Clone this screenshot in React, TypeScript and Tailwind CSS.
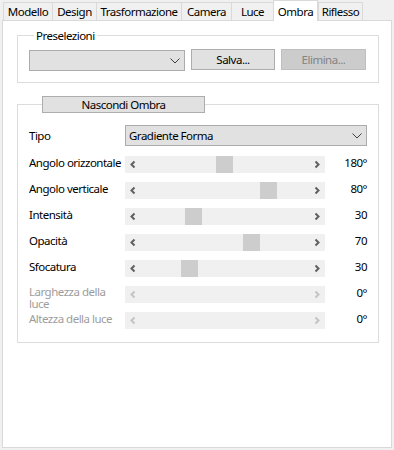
import React from "react";

const font = { fontFamily: '"Noto Sans", "Open Sans", sans-serif', letterSpacing: "-0.5px" };

function Tab({ label, w, selected, last }: { label: string; w: string; selected?: boolean; last?: boolean }) {
  if (selected) {
    return (
      <div className={`relative z-10 -mb-px flex h-[21px] items-start justify-center border-x border-t border-[#d9d9d9] bg-white pt-[2px] ${w}`}>
        {label}
      </div>
    );
  }
  return (
    <div className={`flex h-[18px] items-center justify-center whitespace-nowrap border-l border-t border-[#d9d9d9] bg-[#f0f0f0] pt-[1px] ${last ? "border-r" : ""} ${w}`}>
      {label}
    </div>
  );
}

function Chevron({ dir, disabled }: { dir: "l" | "r"; disabled?: boolean }) {
  return (
    <svg width="8" height="9" viewBox="0 0 8 9">
      <path
        d={dir === "l" ? "M5.5 1.5 L2.5 4.5 L5.5 7.5" : "M2.5 1.5 L5.5 4.5 L2.5 7.5"}
        fill="none"
        stroke={disabled ? "#c4c4c4" : "#606060"}
        strokeWidth="2"
      />
    </svg>
  );
}

function DropChevron() {
  return (
    <svg width="10" height="6" viewBox="0 0 10 6">
      <path d="M0.5 0.5 L5 5 L9.5 0.5" fill="none" stroke="#404040" strokeWidth="1" />
    </svg>
  );
}

function SliderRow({ label, value, thumb, disabled, wrap }: { label: string; value: string; thumb?: number; disabled?: boolean; wrap?: boolean }) {
  return (
    <div className="flex h-[17px]">
      <div className={`w-[96px] shrink-0 ${wrap ? "pr-[8px] leading-[12px]" : "whitespace-nowrap leading-[13px]"} ${disabled ? "text-[#9d9d9d]" : "text-black"}`}>{label}</div>
      <div className="relative flex h-[17px] w-[200px] shrink-0 items-center justify-between bg-[#f0f0f0] px-[4px]">
        <Chevron dir="l" disabled={disabled} />
        <Chevron dir="r" disabled={disabled} />
        {thumb !== undefined && (
          <div className="absolute top-0 h-[17px] w-[17px] bg-[#cdcdcd]" style={{ left: thumb }} />
        )}
      </div>
      <div className="w-[42px] shrink-0 text-right leading-[13px] text-black">{value}</div>
    </div>
  );
}

export default function App() {
  return (
    <div className="flex h-[450px] w-[394px] flex-col bg-[#f0f0f0] px-[2px] pb-[2px] text-[11.5px] text-black" style={font}>
      <div className="flex h-[20px] items-end pl-[1px]">
        <Tab label="Modello" w="w-[49px]" />
        <Tab label="Design" w="w-[44px]" />
        <Tab label="Trasformazione" w="w-[85px]" />
        <Tab label="Camera" w="w-[50px]" />
        <Tab label="Luce" w="w-[42px]" />
        <Tab label="Ombra" w="w-[45px]" selected />
        <Tab label="Riflesso" w="w-[45px]" last />
      </div>
      <div className="flex-1 border border-[#d9d9d9] bg-white">
        <fieldset className="ml-[14px] mt-[7px] w-[362px] border border-[#dcdcdc] pb-[11px] pl-[11px]">
          <legend className="ml-[5px] px-[2px] leading-[15px]">Preselezioni</legend>
          <div className="mt-[6px] flex items-start">
            <div className="mt-[1px] flex h-[21px] w-[156px] items-center justify-end border border-[#acacac] bg-[#e1e1e1] pr-[4px]">
              <DropChevron />
            </div>
            <div className="ml-[6px] flex h-[21px] w-[84px] items-center justify-center border border-[#adadad] bg-[#e1e1e1]">Salva...</div>
            <div className="ml-[6px] flex h-[21px] w-[85px] items-center justify-center border border-[#bfbfbf] bg-[#cccccc] text-[#838383]">Elimina...</div>
          </div>
        </fieldset>
        <fieldset className="ml-[14px] mt-[13px] w-[362px] border border-[#dcdcdc] pb-[13px] pl-[11px]">
          <legend className="ml-[13px]">
            <div className="flex h-[17px] w-[163px] items-center justify-center border border-[#adadad] bg-[#e1e1e1]">Nascondi Ombra</div>
          </legend>
          <div className="mt-[12px] flex h-[21px] items-center">
            <div className="w-[96px] shrink-0">Tipo</div>
            <div className="flex h-[21px] w-[242px] items-center justify-between border border-[#acacac] bg-[#e1e1e1] pl-[3px] pr-[4px]">
              <span>Gradiente Forma</span>
              <DropChevron />
            </div>
          </div>
          <div className="mt-[10px] flex flex-col gap-[9px]">
            <SliderRow label="Angolo orizzontale" value="180°" thumb={91} />
            <SliderRow label="Angolo verticale" value="80°" thumb={135} />
            <SliderRow label="Intensità" value="30" thumb={60} />
            <SliderRow label="Opacità" value="70" thumb={118} />
            <SliderRow label="Sfocatura" value="30" thumb={56} />
            <SliderRow label="Larghezza della luce" value="0°" disabled wrap />
            <SliderRow label="Altezza della luce" value="0°" disabled />
          </div>
        </fieldset>
      </div>
    </div>
  );
}
